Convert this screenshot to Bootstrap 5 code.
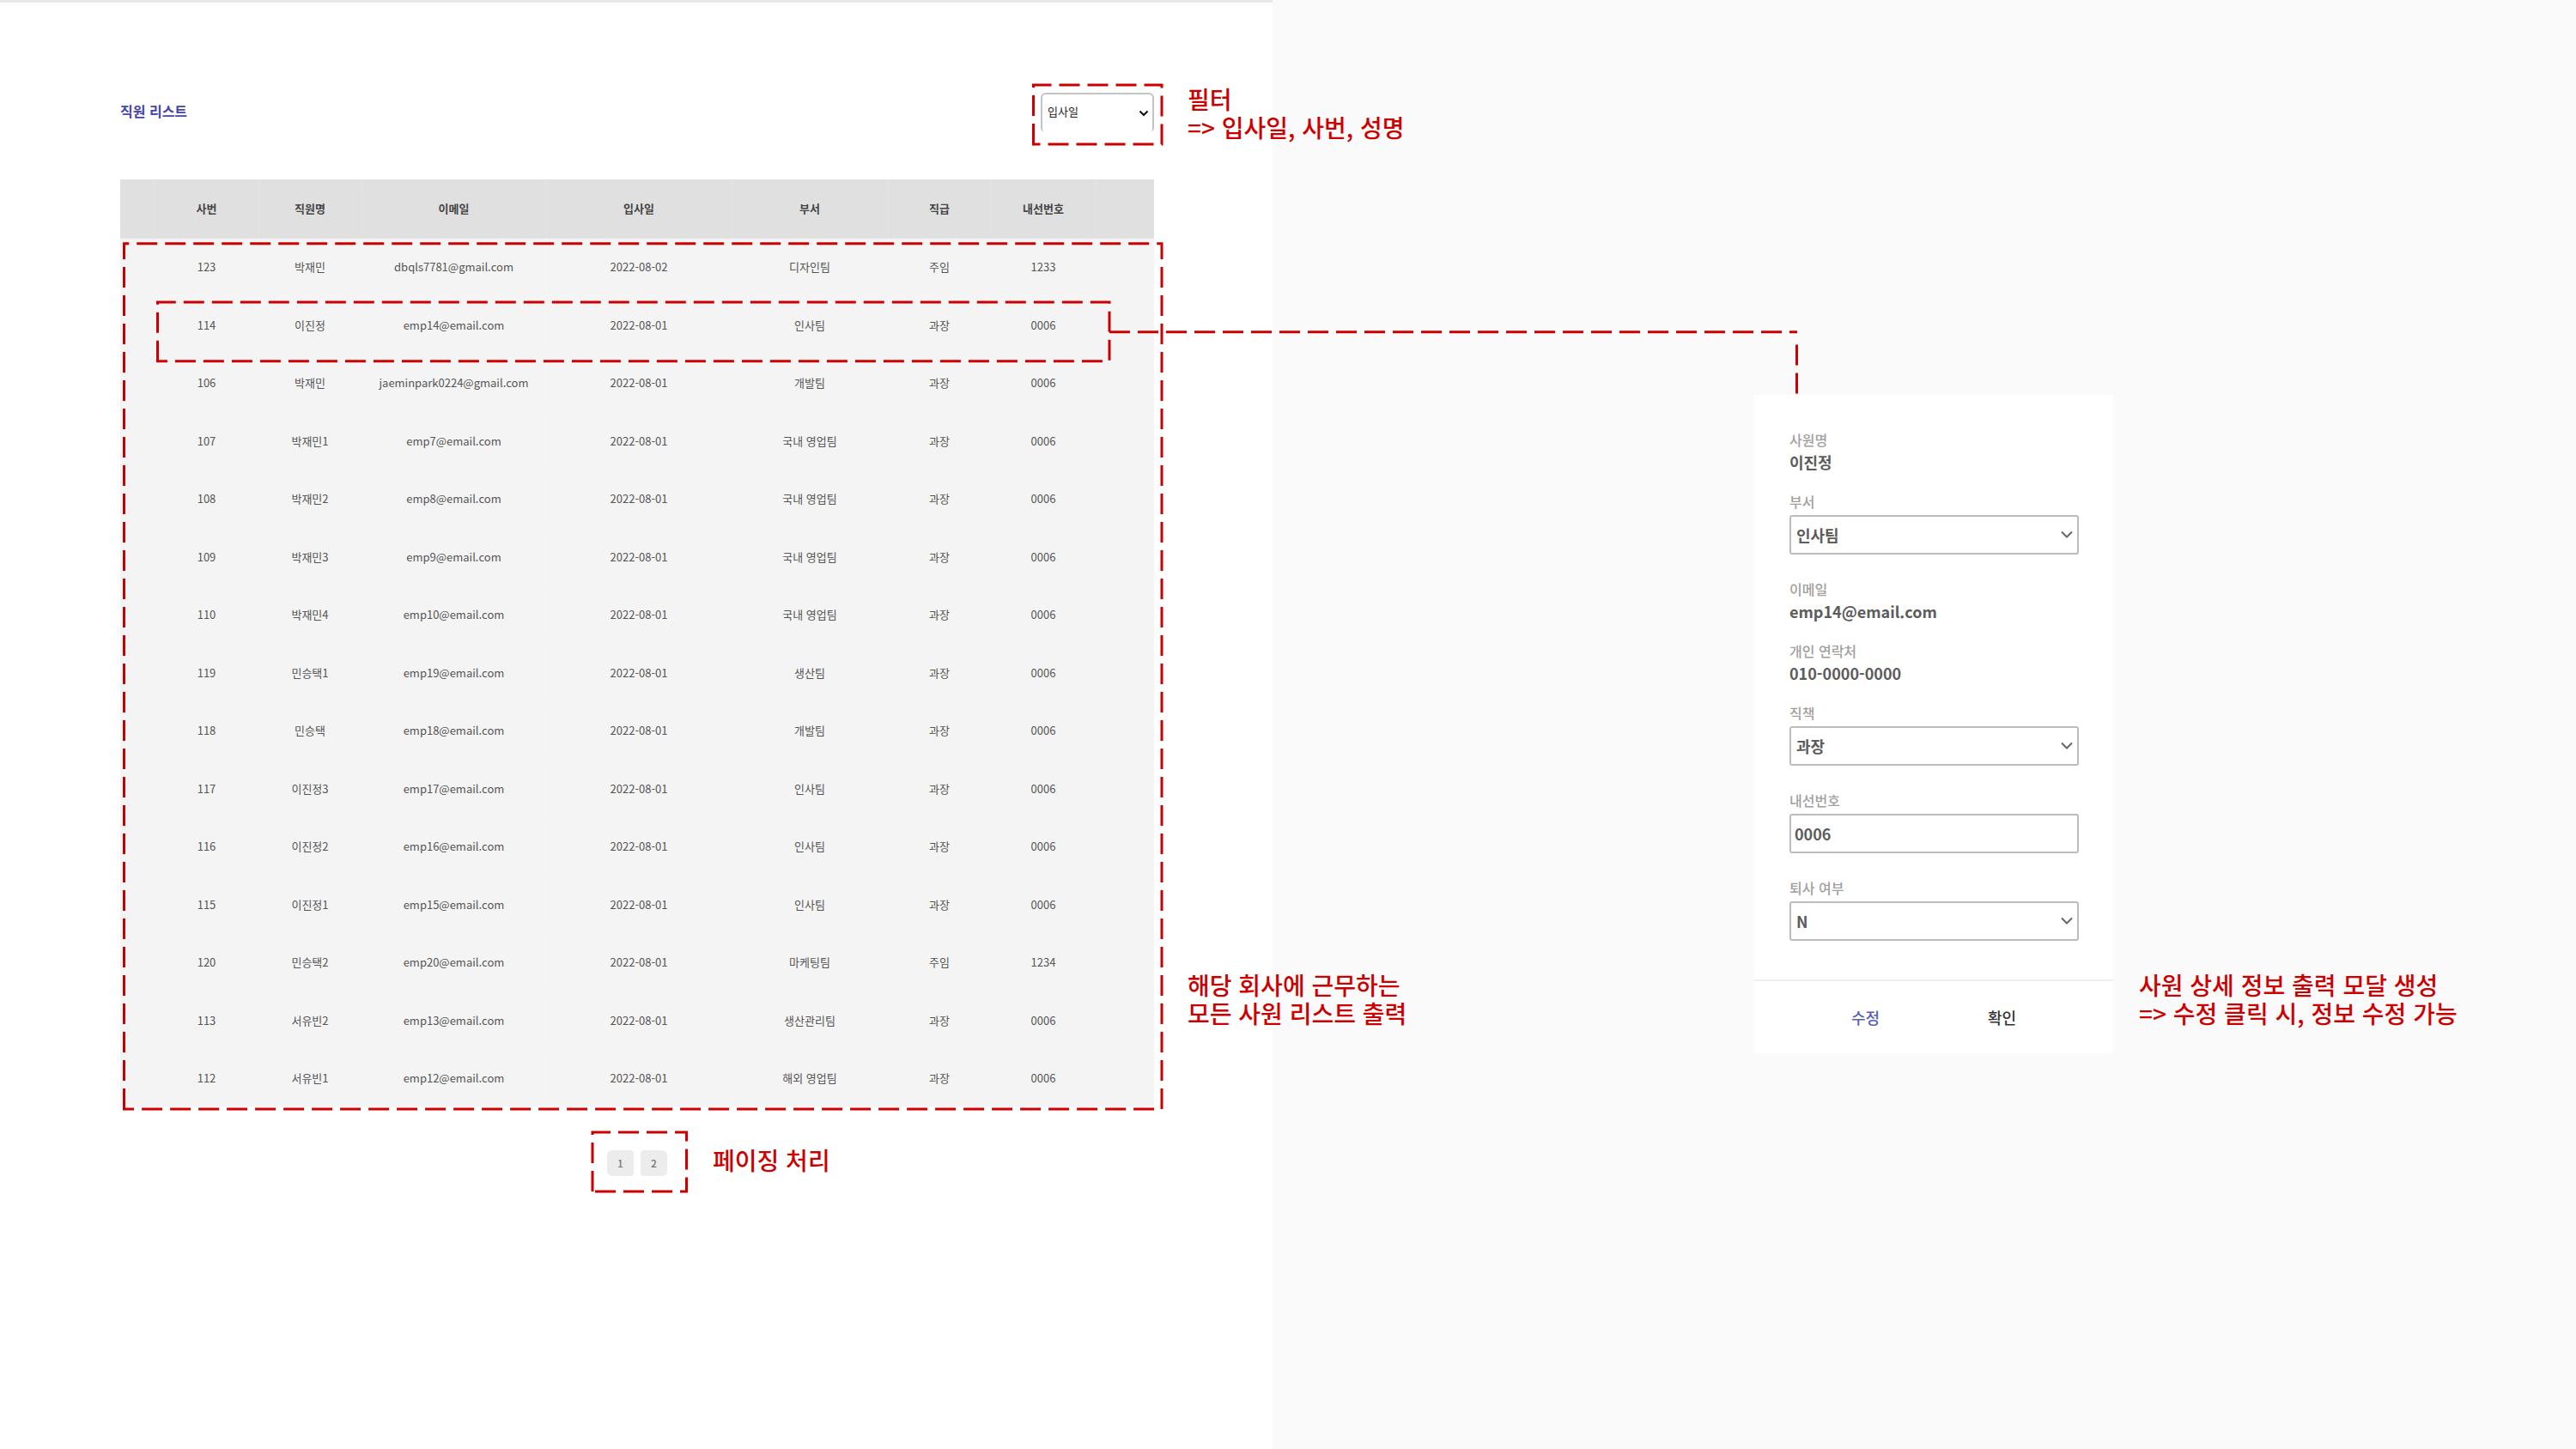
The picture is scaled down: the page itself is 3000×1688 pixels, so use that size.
<!DOCTYPE html>
<html lang="ko">
<head>
<meta charset="utf-8">
<meta name="viewport" content="width=device-width, initial-scale=1">
<title>직원 리스트</title>
<link href="https://cdn.jsdelivr.net/npm/bootstrap@5.3.0/dist/css/bootstrap.min.css" rel="stylesheet">
<style>
  body { background: #fafafa; font-family: "Noto Sans CJK KR", "Noto Sans", sans-serif; color: #555; }
  .list-panel { width: 49.4%; background: #fff; border-top: 3px solid #e8e8e8; padding: 105px 138px 0 140px; }
  .list-head { margin-bottom: 56px; }
  .list-title { padding-top: 9px; font-size: 16px; font-weight: 700; line-height: 24px; color: #4646a8; }

  .form-select { background-repeat: no-repeat; }
  .sort-select { width: 132px; height: 45px; padding: 0 24px 4px 6px; font-size: 13px; color: #222;
    border: 2px solid #c4c4c4; border-bottom: 0; border-radius: 6px 6px 4px 4px;
    background-image: url("data:image/svg+xml,%3Csvg xmlns='http://www.w3.org/2000/svg' viewBox='0 0 12 8'%3E%3Cpath d='M1.5 1.5 6 6l4.500-4.500' fill='none' stroke='%23111' stroke-width='2'/%3E%3C/svg%3E");
    background-size: 12px 8px; background-position: right 4px center; }

  .staff-table { table-layout: fixed; height: 1081px; font-size: 13px; text-align: center; }
  .staff-table > thead { height: 68px; }
  .staff-table > thead > tr > th { height: 68px; }
  .staff-table > tbody > tr > td { height: 67px; }
  .staff-table > :not(caption) > * > * { padding: 0; vertical-align: middle; color: #555; background: #f4f4f4; border: 1px solid #f6f6f6; border-width: 0 1px 1px 0; box-shadow: none; }
  .staff-table > thead > tr > th { background: #e0e0e0; border-color: #e4e4e4; font-weight: 700; color: #444; }
  .staff-table > :not(caption) > * > :last-child { border-right: 0; }

  .pager { margin-top: 50px; gap: 9px; }
  .pager .page-link { width: 31px; height: 30px; padding: 0; border: 0; border-radius: 4px; background: #ececec; color: #777; font-size: 12px; font-weight: 500; line-height: 30px; text-align: center; }

  .detail-area { padding: 460px 0 0 561px; }
  .detail-group { gap: 30px; }
  .detail-card { width: 418px; background: #fff; }
  .detail-fields { padding: 39px 40px 18px 41px; }
  .text-field { margin-bottom: 20px; }
  .input-field { margin-bottom: 27px; }
  .field-name { display: block; margin: 0; font-size: 16px; line-height: 26px; font-weight: 500; color: #a0a0a0; }
  .field-value { margin: 0; font-size: 18px; line-height: 26px; font-weight: 700; color: #5c5c5c; }
  .detail-card .form-select, .detail-card .form-control { height: 46px; margin-top: 3px; padding: 0 30px 0 6px; font-size: 18px; font-weight: 700; color: #5c5c5c; background-color: #fff; border: 2px solid #bcbcbc; border-radius: 3px; }
  .detail-card .form-control { padding-left: 4px; }
  .detail-card .form-select {
    background-image: url("data:image/svg+xml,%3Csvg xmlns='http://www.w3.org/2000/svg' viewBox='0 0 14 10'%3E%3Cpath d='M1 1.500 7 7.500l6-6' fill='none' stroke='%23666' stroke-width='2'/%3E%3C/svg%3E");
    background-size: 14px 10px; background-position: right 5px center; }
  .detail-actions { height: 86px; border-top: 2px solid #efefef; gap: 99px; }
  .detail-actions .btn { width: 60px; padding: 0; border: 0; font-size: 18px; line-height: 26px; font-weight: 500; color: #333; }
  .detail-actions .btn-edit { color: #5560b8; }

  .red-note { margin: 0; font-size: 28px; line-height: 33px; font-weight: 500; color: #c00; white-space: nowrap; }
  .beside-card { margin-bottom: 30px; }
  .note-filter { left: 1383px; top: 99px; }
  .note-list { left: 1383px; top: 1131px; }
  .note-pager { left: 830px; top: 1335px; }
  .callouts { left: 0; top: 0; width: 100%; height: 100%; pointer-events: none; fill: none; stroke: #c00; stroke-width: 3; stroke-dasharray: 24 9; }
</style>
</head>
<body>
<main class="position-relative d-flex min-vh-100">
  <section class="list-panel">
    <header class="list-head d-flex justify-content-between align-items-start">
      <h1 class="list-title mb-0">직원 리스트</h1>
      <select class="form-select sort-select" aria-label="필터">
        <option selected>입사일</option><option>사번</option><option>성명</option>
      </select>
    </header>

    <table class="table staff-table mb-0">
      <colgroup>
        <col style="width:40px"><col style="width:121px"><col style="width:120px"><col style="width:215px"><col style="width:216px"><col style="width:182px"><col style="width:120px"><col style="width:122px"><col style="width:68px">
      </colgroup>
      <thead>
        <tr><th></th><th>사번</th><th>직원명</th><th>이메일</th><th>입사일</th><th>부서</th><th>직급</th><th>내선번호</th><th></th></tr>
      </thead>
      <tbody>
        <tr><td></td><td>123</td><td>박재민</td><td>dbqls7781@gmail.com</td><td>2022-08-02</td><td>디자인팀</td><td>주임</td><td>1233</td><td></td></tr>
        <tr><td></td><td>114</td><td>이진정</td><td>emp14@email.com</td><td>2022-08-01</td><td>인사팀</td><td>과장</td><td>0006</td><td></td></tr>
        <tr><td></td><td>106</td><td>박재민</td><td>jaeminpark0224@gmail.com</td><td>2022-08-01</td><td>개발팀</td><td>과장</td><td>0006</td><td></td></tr>
        <tr><td></td><td>107</td><td>박재민1</td><td>emp7@email.com</td><td>2022-08-01</td><td>국내 영업팀</td><td>과장</td><td>0006</td><td></td></tr>
        <tr><td></td><td>108</td><td>박재민2</td><td>emp8@email.com</td><td>2022-08-01</td><td>국내 영업팀</td><td>과장</td><td>0006</td><td></td></tr>
        <tr><td></td><td>109</td><td>박재민3</td><td>emp9@email.com</td><td>2022-08-01</td><td>국내 영업팀</td><td>과장</td><td>0006</td><td></td></tr>
        <tr><td></td><td>110</td><td>박재민4</td><td>emp10@email.com</td><td>2022-08-01</td><td>국내 영업팀</td><td>과장</td><td>0006</td><td></td></tr>
        <tr><td></td><td>119</td><td>민승택1</td><td>emp19@email.com</td><td>2022-08-01</td><td>생산팀</td><td>과장</td><td>0006</td><td></td></tr>
        <tr><td></td><td>118</td><td>민승택</td><td>emp18@email.com</td><td>2022-08-01</td><td>개발팀</td><td>과장</td><td>0006</td><td></td></tr>
        <tr><td></td><td>117</td><td>이진정3</td><td>emp17@email.com</td><td>2022-08-01</td><td>인사팀</td><td>과장</td><td>0006</td><td></td></tr>
        <tr><td></td><td>116</td><td>이진정2</td><td>emp16@email.com</td><td>2022-08-01</td><td>인사팀</td><td>과장</td><td>0006</td><td></td></tr>
        <tr><td></td><td>115</td><td>이진정1</td><td>emp15@email.com</td><td>2022-08-01</td><td>인사팀</td><td>과장</td><td>0006</td><td></td></tr>
        <tr><td></td><td>120</td><td>민승택2</td><td>emp20@email.com</td><td>2022-08-01</td><td>마케팅팀</td><td>주임</td><td>1234</td><td></td></tr>
        <tr><td></td><td>113</td><td>서유빈2</td><td>emp13@email.com</td><td>2022-08-01</td><td>생산관리팀</td><td>과장</td><td>0006</td><td></td></tr>
        <tr><td></td><td>112</td><td>서유빈1</td><td>emp12@email.com</td><td>2022-08-01</td><td>해외 영업팀</td><td>과장</td><td>0006</td><td></td></tr>
      </tbody>
    </table>

    <nav aria-label="페이지">
      <ul class="pagination pager justify-content-center mb-0">
        <li class="page-item"><a class="page-link" href="#">1</a></li>
        <li class="page-item"><a class="page-link" href="#">2</a></li>
      </ul>
    </nav>
  </section>

  <section class="detail-area flex-grow-1">
    <div class="detail-group d-flex align-items-end">
      <form class="detail-card flex-shrink-0">
        <div class="detail-fields">
          <div class="text-field"><span class="field-name">사원명</span><p class="field-value">이진정</p></div>
          <div class="input-field">
            <label class="field-name" for="dept">부서</label>
            <select class="form-select" id="dept"><option>인사팀</option></select>
          </div>
          <div class="text-field"><span class="field-name">이메일</span><p class="field-value">emp14@email.com</p></div>
          <div class="text-field"><span class="field-name">개인 연락처</span><p class="field-value">010-0000-0000</p></div>
          <div class="input-field">
            <label class="field-name" for="rank">직책</label>
            <select class="form-select" id="rank"><option>과장</option></select>
          </div>
          <div class="input-field">
            <label class="field-name" for="ext">내선번호</label>
            <input class="form-control" id="ext" type="text" value="0006">
          </div>
          <div class="input-field">
            <label class="field-name" for="retired">퇴사 여부</label>
            <select class="form-select" id="retired"><option>N</option></select>
          </div>
        </div>
        <div class="detail-actions d-flex justify-content-center align-items-center">
          <button type="button" class="btn btn-edit">수정</button>
          <button type="button" class="btn">확인</button>
        </div>
      </form>
      <p class="red-note beside-card">사원 상세 정보 출력 모달 생성<br>=&gt; 수정 클릭 시, 정보 수정 가능</p>
    </div>
  </section>

  <p class="red-note note-filter position-absolute">필터<br>=&gt; 입사일, 사번, 성명</p>
  <p class="red-note note-list position-absolute">해당 회사에 근무하는<br>모든 사원 리스트 출력</p>
  <p class="red-note note-pager position-absolute">페이징 처리</p>

  <!-- dashed callout frames and the line from the row to its detail card -->
  <svg class="callouts position-absolute" aria-hidden="true">
    <path d="M1203.500 168V99H1353V168Z"/>
    <path d="M144.500 1292V283.700H1353V1292Z"/>
    <path d="M183.500 420.700V352H1292V420.700Z"/>
    <path d="M690 1388V1319H799.500V1388Z"/>
    <path d="M1292 386.700H2093M2092.500 401.500V460"/>
  </svg>
</main>
<script src="https://cdn.jsdelivr.net/npm/bootstrap@5.3.0/dist/js/bootstrap.bundle.min.js"></script>
</body>
</html>
